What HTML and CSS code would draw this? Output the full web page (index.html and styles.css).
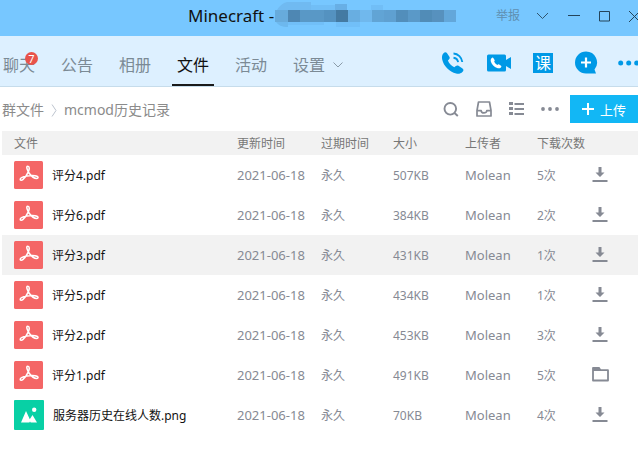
FILE: index.html
```html
<!DOCTYPE html>
<html lang="zh-CN">
<head>
<meta charset="utf-8">
<title>Minecraft</title>
<link rel="stylesheet" href="styles.css">
</head>
<body>
<svg class="sprite" aria-hidden="true">
  <symbol id="pdf" viewBox="0 0 29 28">
    <rect width="29" height="28" rx="1.5" fill="#f46666"/>
    <path d="M13.8 5.2c1.9 0 1.8 3 .5 5.700-1.400 3-3.300 6-5.500 7.800-1 .8-2.700.8-2.600-.4.100-1.300 3-2.500 6.500-3.200 3.600-.7 8-.9 10.300.2 1.600.8 1.300 2.200-.3 2.200-2.400 0-5.600-2.500-7.500-5.200-1.700-2.500-3.600-7.100-1.400-7.100z" fill="none" stroke="#fff" stroke-width="1.500" stroke-linejoin="round"/>
  </symbol>
  <symbol id="png" viewBox="0 0 30 30">
    <rect width="30" height="30" rx="1" fill="#08d0a5"/>
    <path d="M7 22.500 12 11l3.800 8.200 2.700-4.200 4.500 7.500h-6.300l-.7-1-.6 1z" fill="#fff"/>
    <circle cx="20.200" cy="9.700" r="2.200" fill="#fff"/>
  </symbol>
  <symbol id="down" viewBox="0 0 16 16">
    <path d="M6.500 1h3v5.500h3L8 11 3.500 6.500h3zM.5 14h15v2H.5z" fill="#868a94"/>
  </symbol>
  <symbol id="folder" viewBox="0 0 17 16">
    <path d="M1 3v11.500h15V4.200H8.500L7 2H1z" fill="none" stroke="#868a94" stroke-width="1.800" stroke-linejoin="round"/>
    <path d="M1 1.500h6.500L9 5H1z" fill="#868a94"/>
  </symbol>
</svg>

<header class="titlebar">
  <h1 class="title">Minecraft -</h1>
  <svg class="mosaic" width="181" height="28" viewBox="0 0 181 28" aria-hidden="true">
    <path d="M12 0h24v8H2C4 4 8 1 12 0z" fill="#70baf1"/>
    <path d="M36 3h24v5H36zM96 3h12v5H96z" fill="#71bef6"/>
    <path d="M60 2h12v6H60z" fill="#68afe5"/>
    <path d="M0 8h13v12H0z" fill="#67abdc"/>
    <path d="M13 8h12v12H13z" fill="#4e87b3"/>
    <path d="M25 8h24v12H25z" fill="#5998c6"/>
    <path d="M49 8h12v12H49z" fill="#5492c0"/>
    <path d="M61 8h12v12H61z" fill="#447aa2"/>
    <path d="M73 8h12v12H73z" fill="#68aee1"/>
    <path d="M85 8h12v12H85z" fill="#70b8ed"/>
    <path d="M97 8h12v12H97z" fill="#61a4d5"/>
    <path d="M109 8h12v12h-12z" fill="#5fa0d1"/>
    <path d="M121 8h12v12h-12z" fill="#528ebb"/>
    <path d="M133 8h12v12h-12z" fill="#5a99c8"/>
    <path d="M145 8h12v12h-12z" fill="#518cb7"/>
    <path d="M157 8h12v12h-12z" fill="#5791be"/>
    <path d="M169 8h12v12h-12z" fill="#63a7da"/>
    <path d="M1 20h12v5C7 25 3 23 1 20z" fill="#6db8ee"/>
    <path d="M13 20h36v3H13zM61 20h24v5H61z" fill="#71bff8"/>
  </svg>
  <div class="window-buttons">
    <button class="report">举报</button>
    <button class="icon-button" aria-label="更多"><svg width="13" height="8" viewBox="0 0 13 8"><path d="M1 1l5.500 5.500L12 1" fill="none" stroke="#30556f"/></svg></button>
    <button class="icon-button" aria-label="最小化"><svg width="12" height="12" viewBox="0 0 12 12"><path d="M0 5.500h12" stroke="#24445a"/></svg></button>
    <button class="icon-button" aria-label="最大化"><svg width="11" height="11" viewBox="0 0 11 11"><path d="M.5.5h10v9.500H.5z" fill="none" stroke="#24445a"/></svg></button>
    <button class="icon-button" aria-label="关闭"><svg width="9" height="11" viewBox="0 0 9 11"><path d="M0 0l11 11M0 11L11 0" stroke="#24445a"/></svg></button>
  </div>
</header>

<div class="navbar">
  <nav class="tabs">
    <a class="tab" href="#chat">聊天<span class="badge">7</span></a>
    <a class="tab" href="#notice">公告</a>
    <a class="tab" href="#album">相册</a>
    <a class="tab active" href="#files">文件</a>
    <a class="tab" href="#events">活动</a>
    <a class="tab" href="#settings">设置<svg class="caret" width="10" height="6" viewBox="0 0 10 6"><path d="M.5.5L5 5 9.500.5" fill="none" stroke="#8a9ba8"/></svg></a>
  </nav>
  <div class="actions">
    <button class="icon-button" aria-label="语音通话"><svg width="24" height="24" viewBox="0 0 24 24">
      <path d="M2.500 2.200C3.600 1 5 .8 5.900 2l2.500 3.800c.6 1 .4 1.900-.5 2.700l-1 1c1.200 3 3.500 5.400 6.400 6.800l1.500-1.300c.9-.7 1.800-.7 2.700-.2l4 2.700c1.200.8 1.200 2.200.1 3.300-1.700 1.800-4 2.400-6.500 1.800C8.500 21 2.500 14.800 1.200 8.500.7 6 1 3.800 2.500 2.200z" fill="#0099e6"/>
      <path d="M12.500 2.500c4.500.2 8.300 3.900 8.800 8.500M12.500 6.800c2.400.3 4.200 2 4.600 4.400" fill="none" stroke="#0099e6" stroke-width="1.900"/></svg></button>
    <button class="icon-button" aria-label="视频通话"><svg width="24" height="18" viewBox="0 0 24 18">
      <path d="M1.500.5h16a1.500 1.500 0 0 1 1.500 1.500v4L24 3v12l-5-3v4a1.500 1.500 0 0 1-1.500 1.500h-16A1.500 1.500 0 0 1 0 16V2A1.500 1.500 0 0 1 1.500.5z" fill="#0099e6"/>
      <path d="M4.500 4.200c.8-.9 1.500-.7 2 .1L7.600 6c.3.600.1 1-.5 1.600.7 1.600 1.700 2.600 3.300 3.300.7-.7 1.200-.8 1.800-.4l1.800 1.200c.6.500.5 1.200-.1 1.700-1 1-2.400 1-3.800.6-3-1-5.300-3.300-6.200-6.200-.4-1.300-.3-2.700.6-3.600z" fill="#fff"/></svg></button>
    <button class="course">课</button>
    <button class="icon-button" aria-label="添加应用"><svg width="23" height="23" viewBox="0 0 23 23">
      <path d="M11 .5a11 11 0 1 0 0 22h10l-1.500-4A11 11 0 0 0 11 .5z" fill="#0099e6"/>
      <path d="M11 6.500v10M6 11.500h10" stroke="#fff" stroke-width="2.200"/></svg></button>
    <button class="icon-button more" aria-label="更多功能"><svg width="20" height="6" viewBox="0 0 20 6"><g fill="#0099e6"><circle cx="2.700" cy="3" r="2.500"/><circle cx="10.700" cy="3" r="2.500"/><circle cx="18.700" cy="3" r="2.500"/></g></svg></button>
  </div>
</div>

<main>
  <div class="toolbar">
    <div class="breadcrumb"><a href="#root">群文件</a><svg width="6" height="13" viewBox="0 0 6 13"><path d="M1 .5l4 6-4 6" fill="none" stroke="#bcc4ce"/></svg><span>mcmod历史记录</span></div>
    <div class="tools">
      <button class="icon-button" aria-label="搜索"><svg width="16" height="16" viewBox="0 0 16 16"><g fill="none" stroke="#868a94" stroke-width="1.900"><circle cx="7.300" cy="7.800" r="5.800"/><path d="M11.500 12l3.300 3"/></g></svg></button>
      <button class="icon-button" aria-label="收件箱"><svg width="16" height="16" viewBox="0 0 16 16"><g fill="none" stroke="#868a94" stroke-width="1.700" stroke-linejoin="round"><path d="M2.500 1h11L15 9.500V15H1V9.500z"/><path d="M1 9.700h4.200c0 3 5.600 3 5.600 0H15"/></g></svg></button>
      <button class="icon-button" aria-label="列表视图"><svg width="15" height="14" viewBox="0 0 15 14"><path d="M0 0h4v3H0zM5.500 1H15v2H5.500zM0 5h4v3H0zM5.500 6H15v2H5.500zM0 10h4v3H0zM5.500 11H15v2H5.500z" fill="#868a94"/></svg></button>
      <button class="icon-button" aria-label="更多"><svg width="18" height="4" viewBox="0 0 18 4"><g fill="#868a94"><circle cx="2" cy="2" r="1.900"/><circle cx="9" cy="2" r="1.900"/><circle cx="16" cy="2" r="1.900"/></g></svg></button>
      <button class="upload"><svg width="12" height="12" viewBox="0 0 12 12"><path d="M6 0v12M0 6h12" stroke="#fff" stroke-width="2"/></svg><span class="label">上传</span></button>
    </div>
  </div>

  <table class="files">
    <colgroup><col class="c-name"><col class="c-date"><col class="c-mid"><col class="c-mid"><col class="c-mid"><col class="c-count"><col></colgroup>
    <thead>
      <tr><th>文件</th><th>更新时间</th><th>过期时间</th><th>大小</th><th>上传者</th><th colspan="2">下载次数</th></tr>
    </thead>
    <tbody>
      <tr><td><div class="file"><svg width="29" height="28"><use href="#pdf"/></svg><span class="label">评分4.pdf</span></div></td><td class="latin">2021-06-18</td><td class="label">永久</td><td class="label">507KB</td><td class="latin">Molean</td><td class="label">5次</td><td class="act"><button class="icon-button" aria-label="下载"><svg width="16" height="16"><use href="#down"/></svg></button></td></tr>
      <tr><td><div class="file"><svg width="29" height="28"><use href="#pdf"/></svg><span class="label">评分6.pdf</span></div></td><td class="latin">2021-06-18</td><td class="label">永久</td><td class="label">384KB</td><td class="latin">Molean</td><td class="label">2次</td><td class="act"><button class="icon-button" aria-label="下载"><svg width="16" height="16"><use href="#down"/></svg></button></td></tr>
      <tr class="hover"><td><div class="file"><svg width="29" height="28"><use href="#pdf"/></svg><span class="label">评分3.pdf</span></div></td><td class="latin">2021-06-18</td><td class="label">永久</td><td class="label">431KB</td><td class="latin">Molean</td><td class="label">1次</td><td class="act"><button class="icon-button" aria-label="下载"><svg width="16" height="16"><use href="#down"/></svg></button></td></tr>
      <tr><td><div class="file"><svg width="29" height="28"><use href="#pdf"/></svg><span class="label">评分5.pdf</span></div></td><td class="latin">2021-06-18</td><td class="label">永久</td><td class="label">434KB</td><td class="latin">Molean</td><td class="label">1次</td><td class="act"><button class="icon-button" aria-label="下载"><svg width="16" height="16"><use href="#down"/></svg></button></td></tr>
      <tr><td><div class="file"><svg width="29" height="28"><use href="#pdf"/></svg><span class="label">评分2.pdf</span></div></td><td class="latin">2021-06-18</td><td class="label">永久</td><td class="label">453KB</td><td class="latin">Molean</td><td class="label">3次</td><td class="act"><button class="icon-button" aria-label="下载"><svg width="16" height="16"><use href="#down"/></svg></button></td></tr>
      <tr><td><div class="file"><svg width="29" height="28"><use href="#pdf"/></svg><span class="label">评分1.pdf</span></div></td><td class="latin">2021-06-18</td><td class="label">永久</td><td class="label">491KB</td><td class="latin">Molean</td><td class="label">5次</td><td class="act"><button class="icon-button" aria-label="打开文件夹"><svg width="17" height="16"><use href="#folder"/></svg></button></td></tr>
      <tr><td><div class="file"><svg width="30" height="30"><use href="#png"/></svg><span class="label">服务器历史在线人数.png</span></div></td><td class="latin">2021-06-18</td><td class="label">永久</td><td class="label">70KB</td><td class="latin">Molean</td><td class="label">4次</td><td class="act"><button class="icon-button" aria-label="下载"><svg width="16" height="16"><use href="#down"/></svg></button></td></tr>
    </tbody>
  </table>
</main>
</body>
</html>
```
FILE: styles.css
```css
* {
  box-sizing: border-box;
}

body {
  margin: 0;
  background: #fff;
  font-family: "Noto Sans", "Noto Sans CJK SC", sans-serif;
  font-size: 12px;
  line-height: 16px;
  color: #868a94;
  overflow-x: hidden;
}

button {
  font: inherit;
  color: inherit;
  border: 0;
  padding: 0;
  background: none;
}

a {
  color: inherit;
  text-decoration: none;
}

svg {
  display: block;
  flex: none;
}

.sprite {
  position: absolute;
  width: 0;
  height: 0;
}

.icon-button {
  display: flex;
  align-items: center;
}

.titlebar {
  display: flex;
  align-items: center;
  height: 36px;
  padding: 0 0 4px 188px;
  background: #77c7ff;
}

.title {
  width: 87px;
  margin: 0;
  font-size: 17px;
  font-weight: 400;
  line-height: 24px;
  color: #111;
  white-space: nowrap;
}

.window-buttons {
  display: flex;
  align-items: center;
  gap: 19px;
  margin-left: auto;
}

.report {
  color: #5f8fb1;
  margin-right: -3px;
}

.navbar {
  display: flex;
  justify-content: space-between;
  height: 51px;
  background: #ddf0ff;
  border-bottom: 1px solid #c6dceb;
}

.tabs {
  display: flex;
  gap: 16px;
  margin-left: -2px;
}

.tab {
  position: relative;
  display: flex;
  align-items: center;
  gap: 8px;
  padding: 10px 5px 0;
  border-bottom: 2px solid transparent;
  font-size: 16px;
  line-height: 24px;
  color: #7b8a95;
  white-space: nowrap;
}

.tab.active {
  color: #111;
  border-color: #1a1a1a;
}

.badge {
  position: absolute;
  top: 16px;
  right: 2px;
  width: 13px;
  height: 13px;
  border-radius: 50%;
  background: #e8534b;
  color: #fff;
  font-size: 11px;
  line-height: 13px;
  text-align: center;
}

.actions {
  display: flex;
  align-items: center;
  gap: 22px;
  padding-top: 3px;
}

.more {
  margin-left: -2px;
}

.course {
  width: 20px;
  height: 20px;
  background: #0099e6;
  color: #fff;
  font-size: 16px;
  line-height: 18px;
}

.toolbar {
  display: flex;
  align-items: center;
  justify-content: space-between;
  height: 44px;
  padding-left: 2px;
}

.breadcrumb {
  display: flex;
  align-items: center;
  gap: 7px;
  padding-top: 2px;
  font-size: 14px;
  line-height: 20px;
  color: #8b8b8b;
}

.tools {
  display: flex;
  align-items: center;
  gap: 17px;
}

.upload {
  display: flex;
  align-items: center;
  gap: 6px;
  height: 28px;
  margin-left: -6px;
  padding: 0 12px;
  background: #12b7f5;
  color: #fff;
  font-size: 13px;
}

.files {
  width: calc(100% - 2px);
  margin-left: 2px;
  border-collapse: collapse;
  table-layout: fixed;
}

.c-name {
  width: 235px;
}

.c-date {
  width: 84px;
}

.c-mid {
  width: 72px;
}

.c-count {
  width: 55px;
}

th,
td {
  padding: 0;
  text-align: left;
  font-weight: 400;
  white-space: nowrap;
}

th {
  height: 24px;
  padding-top: 2px;
  background: #f2f2f2;
  color: #777;
}

td {
  height: 40px;
}

th:first-child,
td:first-child {
  padding-left: 12px;
}

.label {
  padding-top: 2px;
}

.act {
  padding-bottom: 2px;
}

.hover {
  background: #f2f2f2;
}

.latin {
  font-size: 13px;
}

.file {
  display: flex;
  align-items: center;
  gap: 9px;
  color: #111;
}
```
